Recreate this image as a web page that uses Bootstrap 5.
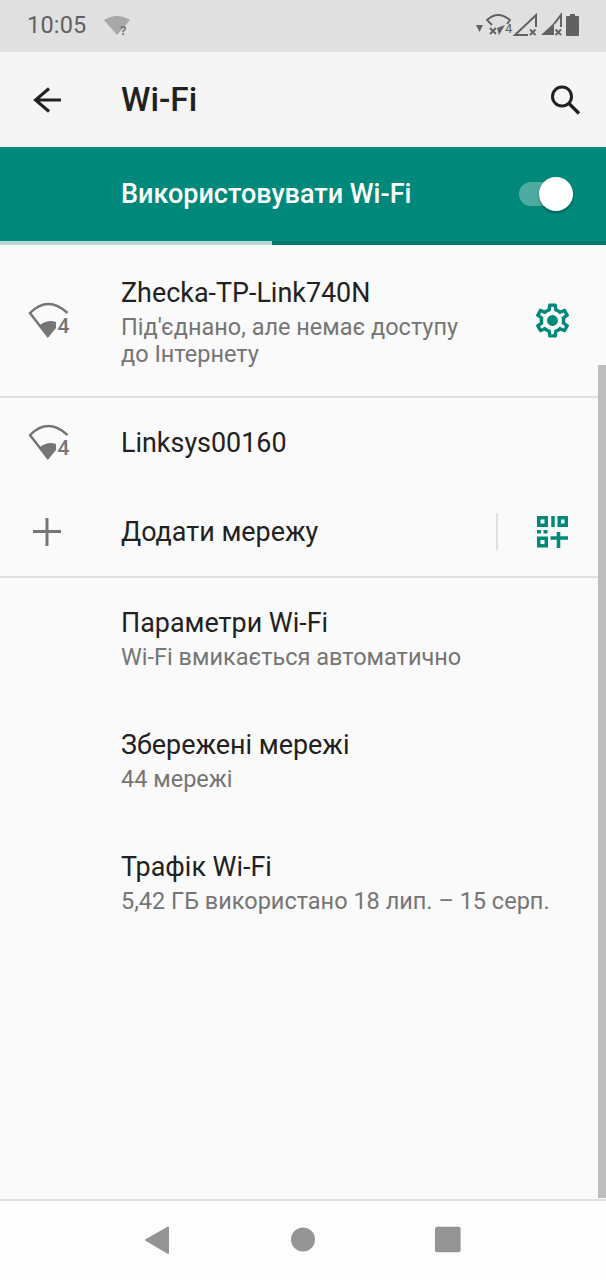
<!DOCTYPE html>
<html lang="uk">
<head>
    <meta charset="UTF-8">
    <meta name="viewport" content="width=device-width, initial-scale=1.0">
    <title>Wi-Fi</title>
    <link href="https://cdn.jsdelivr.net/npm/bootstrap@5.3.0/dist/css/bootstrap.min.css" rel="stylesheet">
    <style>
        body {
            background-color: #fafafa;
            font-family: Roboto, "Noto Sans", sans-serif;
            color: #212121;
        }
        .phone {
            position: relative;
            width: 606px;
            height: 1280px;
            overflow: hidden;
        }
        .status-bar {
            height: 52px;
            background-color: #e0e0e0;
            padding: 0 24px 0 27px;
            color: #616161;
        }
        .status-time {
            font-size: 23.5px;
            letter-spacing: .2px;
            width: 77px;
        }
        .app-bar {
            height: 95px;
            background-color: #f5f5f5;
        }
        .app-title {
            font-size: 33.4px;
            font-weight: 500;
            margin-left: 59px;
            padding-top: 2px;
        }
        .search-icon {
            margin-right: 24px;
        }
        .icon-slot {
            width: 121px;
            flex: none;
            padding-left: 28px;
        }
        .icon-slot-first {
            padding-top: 26px;
        }
        .master-switch {
            position: relative;
            height: 98px;
            background-color: #00897b;
            padding: 0 35px 4px 121px;
            color: #fff;
            font-size: 27px;
            font-weight: 500;
        }
        .scan-track {
            position: absolute;
            left: 0;
            right: 0;
            bottom: 0;
            height: 4px;
            background-color: #00796b;
        }
        .scan-fill {
            height: 100%;
            background-color: #b6d9d4;
        }
        .toggle-track {
            position: relative;
            width: 52px;
            height: 24px;
            border-radius: 12px;
            background-color: #4dac9f;
        }
        .toggle-thumb {
            position: absolute;
            right: -2px;
            top: -5px;
            width: 34px;
            height: 34px;
            border-radius: 50%;
            background-color: #fff;
            box-shadow: 0 2px 3px rgba(0, 0, 0, .3);
        }
        .row-title {
            font-size: 26.9px;
            line-height: 34px;
        }
        .row-sub {
            font-size: 23.5px;
            line-height: 27px;
            margin-top: 4px;
            color: #757575;
        }
        .net-first {
            height: 151px;
            padding-top: 31px;
        }
        .net-row {
            height: 89px;
        }
        .divider-line {
            height: 2px;
            background-color: #e0e0e0;
        }
        .settings-row {
            height: 122px;
            padding: 28px 0 0 121px;
        }
        .trailing {
            width: 110px;
            flex: none;
            padding: 23.500px 33.500px 0 0;
        }
        .v-rule {
            width: 2px;
            height: 37px;
            margin-right: 39px;
            background-color: #e0e0e0;
        }
        .qr-icon {
            margin-right: 38px;
        }
        .scroll-thumb {
            position: absolute;
            right: 0;
            top: 365px;
            width: 8px;
            height: 833px;
            background-color: #bdbdbd;
        }
        .nav-bar {
            position: absolute;
            left: 0;
            right: 0;
            bottom: 0;
            height: 81px;
            background-color: #fdfdfd;
            border-top: 2px solid #e0e0e0;
        }
    </style>
</head>
<body>
    <div class="phone">
        <!-- Status bar -->
        <div class="status-bar d-flex align-items-center">
            <span class="status-time">10:05</span>
            <svg width="26" height="22" viewBox="0 0 26 22">
                <path d="M0 5 Q13 -3 26 5 L13 20 Z" fill="#a8a8a8"/>
                <text x="16" y="20" font-family="Roboto, sans-serif" font-size="13" font-weight="700" fill="#757575">?</text>
            </svg>
            <svg width="106" height="32" viewBox="0 0 106 32" class="ms-auto">
                <path d="M0 15H7L3.500 22Z" fill="#616161"/>
                <path d="M16 15L11 10Q22 0 34 10L31 14" fill="none" stroke="#616161" stroke-width="1.800"/>
                <path d="M14 18l6 6m0 -6l-6 6" stroke="#616161" stroke-width="1.800"/>
                <path d="M21 18L29 15L23 25Z" fill="#616161"/>
                <text x="29" y="23" font-family="Roboto, sans-serif" font-size="13" fill="#616161">4</text>
                <path d="M52 25H39L60 5V17" fill="none" stroke="#616161" stroke-width="2"/>
                <path d="M54 19.500l5.500 5.500m0 -5.500l-5.500 5.500" stroke="#616161" stroke-width="1.800"/>
                <path d="M65 25L78 13V25Z" fill="#616161"/>
                <path d="M78 14L85 5V17" fill="none" stroke="#616161" stroke-width="2"/>
                <path d="M79.500 19.500l5.500 5.500m0 -5.500l-5.500 5.500" stroke="#616161" stroke-width="1.800"/>
                <path d="M94 4H99V6H102Q103 6 103 7V25Q103 26 102 26H91Q90 26 90 25V7Q90 6 91 6H94Z" fill="#616161"/>
            </svg>
        </div>

        <!-- Toolbar -->
        <div class="app-bar d-flex align-items-center">
            <svg width="62" height="30" viewBox="0 0 62 30">
                <path d="M61 15H36M49 3.500L35.500 15L49 26.500" fill="none" stroke="#212121" stroke-width="3"/>
            </svg>
            <div class="app-title flex-grow-1">Wi-Fi</div>
            <svg width="32" height="32" viewBox="0 0 32 32" class="search-icon">
                <circle cx="12" cy="12.500" r="9.500" fill="none" stroke="#212121" stroke-width="3"/>
                <path d="M18.500 19L29 29.500" stroke="#212121" stroke-width="3.400"/>
            </svg>
        </div>

        <!-- Master switch -->
        <div class="master-switch d-flex align-items-center justify-content-between">
            <span>Використовувати Wi-Fi</span>
            <div class="toggle-track"><div class="toggle-thumb"></div></div>
            <div class="scan-track"><div class="scan-fill" style="width: 272px"></div></div>
        </div>

        <!-- Connected network -->
        <div class="net-first d-flex align-items-start">
            <div class="icon-slot icon-slot-first">
                <svg width="42" height="38" viewBox="0 0 42 38">
                    <path d="M39.500 11Q20 -7 2 11L20.500 35" fill="none" stroke="#757575" stroke-width="2.400"/>
                    <path d="M12 23Q20 17 28 20V26L20.500 35Z" fill="#757575"/>
                    <text x="29.500" y="31" font-family="Roboto, sans-serif" font-size="21" font-weight="500" fill="#757575">4</text>
                </svg>
            </div>
            <div class="flex-grow-1">
                <div class="row-title">Zhecka-TP-Link740N</div>
                <div class="row-sub">Під'єднано, але немає доступу<br>до Інтернету</div>
            </div>
            <div class="trailing d-flex justify-content-end">
                <svg width="41" height="41" viewBox="0 0 24 24">
                    <path fill="#00897b" d="M19.430 12.980c.04-.32.07-.64.07-.98 0-.34-.03-.66-.07-.98l2.110-1.650c.19-.15.24-.42.12-.64l-2-3.460c-.09-.16-.26-.25-.44-.25-.06 0-.12.01-.17.03l-2.490 1c-.52-.4-1.080-.73-1.690-.98l-.38-2.650C14.460 2.180 14.250 2 14 2h-4c-.25 0-.46.18-.49.42l-.38 2.650c-.61.25-1.170.59-1.690.98l-2.490-1c-.06-.02-.12-.03-.18-.03-.17 0-.34.09-.43.25l-2 3.460c-.13.22-.07.49.12.64l2.110 1.650c-.04.32-.07.65-.07.98 0 .33.03.66.07.98l-2.110 1.650c-.19.15-.24.42-.12.64l2 3.460c.09.16.26.25.44.25.06 0 .12-.01.17-.03l2.490-1c.52.4 1.080.73 1.690.98l.38 2.650c.03.24.24.42.49.42h4c.25 0 .46-.18.49-.42l.38-2.650c.61-.25 1.170-.59 1.690-.98l2.490 1c.06.02.12.03.18.03.17 0 .34-.09.43-.25l2-3.460c.12-.22.07-.49-.12-.64l-2.110-1.650zm-1.980-1.710c.04.31.05.52.05.73 0 .21-.02.43-.05.73l-.14 1.130.89.7 1.080.84-.7 1.210-1.270-.51-1.040-.42-.9.68c-.43.32-.84.56-1.250.73l-1.060.43-.16 1.130-.2 1.350h-1.400l-.19-1.350-.16-1.130-1.060-.43c-.43-.18-.83-.41-1.230-.71l-.91-.7-1.060.43-1.270.51-.7-1.210 1.080-.84.89-.7-.14-1.130c-.03-.31-.05-.54-.05-.74s.02-.43.05-.73l.14-1.130-.89-.7-1.080-.84.7-1.210 1.270.51 1.040.42.9-.68c.43-.32.84-.56 1.250-.73l1.060-.43.16-1.130.2-1.350h1.390l.19 1.350.16 1.130 1.060.43c.43.18.83.41 1.230.71l.91.7 1.060-.43 1.270-.51.7 1.210-1.070.85-.89.7.14 1.130z"/>
                    <circle cx="12" cy="12" r="3.200" fill="#00897b"/>
                </svg>
            </div>
        </div>
        <div class="divider-line"></div>

        <!-- Other network -->
        <div class="net-row d-flex align-items-center">
            <div class="icon-slot">
                <svg width="42" height="38" viewBox="0 0 42 38">
                    <path d="M39.500 11Q20 -7 2 11L20.500 35" fill="none" stroke="#757575" stroke-width="2.400"/>
                    <path d="M12 23Q20 17 28 20V26L20.500 35Z" fill="#757575"/>
                    <text x="29.500" y="31" font-family="Roboto, sans-serif" font-size="21" font-weight="500" fill="#757575">4</text>
                </svg>
            </div>
            <div class="row-title">Linksys00160</div>
        </div>

        <!-- Add network -->
        <div class="net-row d-flex align-items-center">
            <div class="icon-slot">
                <svg width="34" height="34" viewBox="0 0 34 34">
                    <path d="M19 3V31M5 16.500H33" stroke="#757575" stroke-width="3"/>
                </svg>
            </div>
            <div class="row-title flex-grow-1">Додати мережу</div>
            <div class="v-rule"></div>
            <svg width="31" height="32" viewBox="0 0 31 32" class="qr-icon">
                <g fill="none" stroke="#00897b" stroke-width="3.500">
                    <rect x="1.750" y="1.750" width="7.500" height="7.500"/>
                    <rect x="22.250" y="1.750" width="7" height="7.500"/>
                    <rect x="1.750" y="22.250" width="7.500" height="7.500"/>
                    <path d="M16 0V11M13.500 22H31M21.500 16V32"/>
                </g>
                <path d="M0 14h4v3.500H0zM6.500 14h4v3.500h-4z" fill="#00897b"/>
            </svg>
        </div>
        <div class="divider-line"></div>

        <!-- Settings entries -->
        <div>
            <div class="settings-row">
                <div class="row-title">Параметри Wi-Fi</div>
                <div class="row-sub">Wi-Fi вмикається автоматично</div>
            </div>
            <div class="settings-row">
                <div class="row-title">Збережені мережі</div>
                <div class="row-sub">44 мережі</div>
            </div>
            <div class="settings-row">
                <div class="row-title">Трафік Wi-Fi</div>
                <div class="row-sub">5,42 ГБ використано 18 лип. – 15 серп.</div>
            </div>
        </div>

        <div class="scroll-thumb"></div>

        <!-- Navigation bar -->
        <div class="nav-bar">
            <svg width="606" height="79" viewBox="0 0 606 79" class="d-block">
                <path d="M146 39L168 26.500V52Z" fill="#949494" stroke="#949494" stroke-width="2" stroke-linejoin="round"/>
                <circle cx="303" cy="38.500" r="12" fill="#949494"/>
                <rect x="435" y="25.700" width="25.600" height="25.600" rx="2" fill="#949494"/>
            </svg>
        </div>
    </div>

    <script src="https://cdn.jsdelivr.net/npm/bootstrap@5.3.0/dist/js/bootstrap.bundle.min.js"></script>
</body>
</html>
